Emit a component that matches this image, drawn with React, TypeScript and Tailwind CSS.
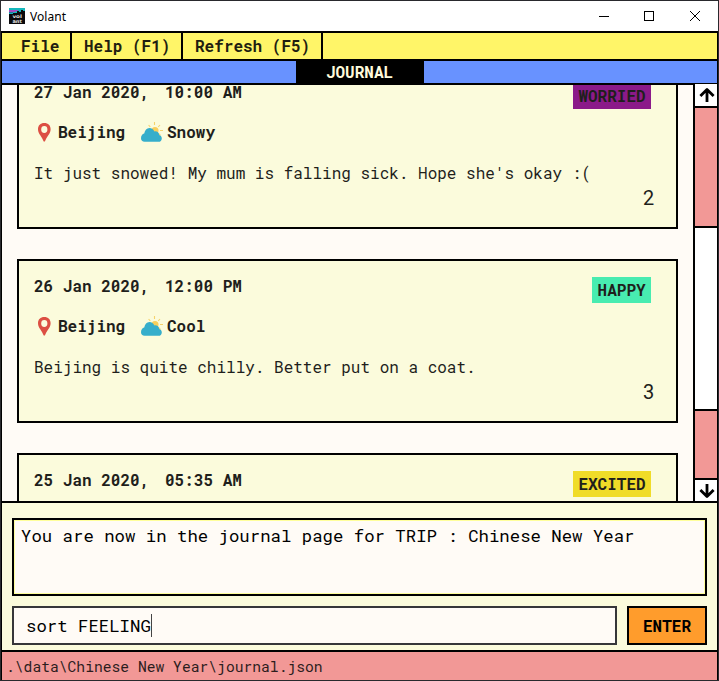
import React from "react";

const mono = "font-['Roboto_Mono','DejaVu_Sans_Mono',monospace]";

function AppIcon() {
  return (
    <svg width="16" height="16" viewBox="0 0 16 16">
      <rect width="16" height="16" fill="#0a0a0d" />
      <g shapeRendering="crispEdges">
        <path d="M0 0H16V3H14V2H12V4H10V3H8V5H4V6H0Z" fill="#14b8bd" />
        <path d="M0 2H9V3H7V4H0Z" fill="#a04cc0" />
        <path d="M0 4H4V5H0Z" fill="#2a6f9f" />
      </g>
      <g fill="#e2e2e2" fontFamily="DejaVu Sans" fontSize="4.8" fontWeight="700" textAnchor="middle">
        <text x="8.2" y="10" textLength="9.5" lengthAdjust="spacingAndGlyphs">vol</text>
        <text x="8.2" y="14.8" textLength="9.5" lengthAdjust="spacingAndGlyphs">ant</text>
      </g>
    </svg>
  );
}

function Pin() {
  return (
    <svg width="13" height="19" viewBox="0 0 13 19" className="block">
      <path
        fillRule="evenodd"
        fill="#dc4f43"
        d="M6.3 0C2.4 0 0 2.4 0 6.2C0 10.8 4.2 13.8 5.7 18.6H6.9C8.4 13.8 12.6 10.8 12.6 6.2C12.6 2.4 10.2 0 6.3 0ZM6.3 3.1A3.1 3.4 0 1 1 6.3 9.9A3.1 3.4 0 1 1 6.3 3.1Z"
      />
    </svg>
  );
}

function Weather() {
  return (
    <svg width="22" height="20" viewBox="0 0 22 20" className="block">
      <g stroke="#f6d36b" strokeWidth="1.1">
        <path d="M13.5 0V3M7.6 3L9.3 5M19 3L17.2 5M19 8.5H22M17.6 11.5L19.5 13.3" />
      </g>
      <circle cx="14" cy="8.5" r="3.5" fill="#f8cf5c" />
      <path
        d="M3.6 19.8C1.4 19.8 0 18.4 0 16.2C0 13.8 1.2 12 3.2 11.5C4 8.2 5.6 6 8.4 6C10.8 6 12.5 7.3 13.3 9.4C16 9 18.2 10.6 18.2 13C19.8 13.4 20.8 14.8 20.8 16.4C20.8 18.4 19.4 19.8 17.4 19.8Z"
        fill="#36aecb"
      />
    </svg>
  );
}

function Arrow({ down = false }: { down?: boolean }) {
  return (
    <svg width="16" height="16" viewBox="0 0 16 16" className={down ? "rotate-180" : ""} fill="none" stroke="#000" strokeWidth="2.8">
      <path d="M8 15V2.4M1.4 9L8 2.4L14.6 9" strokeLinejoin="round" />
    </svg>
  );
}

interface Entry {
  date: string;
  time: string;
  weather: string;
  text: string;
  feeling: string;
  badge: string;
  index: number;
}

const entries: Entry[] = [
  { date: "27 Jan 2020,", time: "10:00 AM", weather: "Snowy", text: "It just snowed! My mum is falling sick. Hope she's okay :(", feeling: "WORRIED", badge: "bg-[#8b1a89]", index: 2 },
  { date: "26 Jan 2020,", time: "12:00 PM", weather: "Cool", text: "Beijing is quite chilly. Better put on a coat.", feeling: "HAPPY", badge: "bg-[#48ecb0]", index: 3 },
  { date: "25 Jan 2020,", time: "05:35 AM", weather: "", text: "", feeling: "EXCITED", badge: "bg-[#f0dc28]", index: 4 },
];

function Card({ entry }: { entry: Entry }) {
  return (
    <article className="h-[164px] shrink-0 border-2 border-black bg-[#fbfbdc] pt-[13px] pr-[25px] pl-[15px] leading-6 text-[#1f1f1c]">
      <div className="flex h-6 items-start justify-between font-bold">
        <div className="flex gap-[15.8px]">
          <span>{entry.date}</span>
          <span>{entry.time}</span>
        </div>
        <span className={`mt-[3px] h-[26px] px-[5.4px] leading-[26px] ${entry.badge}`}>{entry.feeling}</span>
      </div>
      {entry.text && (
        <>
          <div className="mt-4 flex h-6 items-center pl-1 font-bold">
            <Pin />
            <span className="ml-[7px] w-[83px]">Beijing</span>
            <Weather />
            <span className="ml-1">{entry.weather}</span>
          </div>
          <p className="mt-[17px] whitespace-nowrap">{entry.text}</p>
          <div className="-mr-1 text-right text-xl leading-6">{entry.index}</div>
        </>
      )}
    </article>
  );
}

export default function App() {
  return (
    <div className={`flex h-[681px] w-[719px] flex-col overflow-hidden border border-[#29292d] bg-white text-base ${mono}`}>
      <header className="flex h-[30px] shrink-0 items-center pl-2">
        <AppIcon />
        <span className="ml-[5px] grow pt-px font-['Noto_Sans','Open_Sans',sans-serif] text-xs tracking-[0.05px] text-black">Volant</span>
        <svg width="105" height="12" viewBox="0 0 105 12" className="mr-[16px]" fill="none" stroke="#000">
          <path d="M2 6.5H12" />
          <rect x="47.5" y="1.5" width="9" height="9" />
          <path d="M93 1L103 11M103 1L93 11" />
        </svg>
      </header>

      <div className="flex min-h-0 grow flex-col border-x border-black">
        <nav className="flex h-[30px] shrink-0 border-y-2 border-black bg-[#fff568] font-bold leading-[26px] text-[#1f1f10]">
          <span className="w-[70px] border-r-2 border-black pl-[19px]">File</span>
          <span className="w-[111px] border-r-2 border-black pl-3">Help (F1)</span>
          <span className="w-[140px] border-r-2 border-black pl-3">Refresh (F5)</span>
        </nav>
        <div className="flex h-6 shrink-0 border-b-2 border-black bg-[#6892ff] pl-[294px]">
          <h1 className="w-32 bg-black pr-px text-center font-bold leading-[22px] text-[#fffbdc]">JOURNAL</h1>
        </div>

        <main className="flex h-[416px] shrink-0 bg-[#fffbf6]">
          <section className="flex min-w-0 grow flex-col overflow-hidden px-[15px]">
            <div className="-mt-5 flex flex-col gap-[30px]">
              {entries.map((entry) => (
                <Card key={entry.index} entry={entry} />
              ))}
            </div>
          </section>
          <aside className="-mt-px flex w-6 shrink-0 flex-col border-l-2 border-black bg-[#f29896]">
            <div className="flex h-6 items-center justify-center border-b-2 border-black bg-white pl-px">
              <Arrow />
            </div>
            <div className="mt-[118px] h-[185px] border-y-2 border-black bg-white" />
            <div className="mt-auto flex h-[23px] items-center justify-center border-t-2 border-black bg-white pl-px">
              <Arrow down />
            </div>
          </aside>
        </main>

        <section className="h-[149px] shrink-0 border-t-2 border-black bg-[#fbfbdc] px-2.5 pt-[15px] text-[17.33px]">
          <div className="h-[78px] border-2 border-black bg-[#fffbf6]">
            <p className="h-full border border-[#ffff9c] pl-1.5 leading-[29px] text-black">
              You are now in the journal page for TRIP : Chinese New Year
            </p>
          </div>
          <div className="mt-2.5 flex h-[39px] gap-2.5">
            <div className="flex grow items-center border-2 border-[#363639] bg-[#fffbf6] pl-3">
              <span>sort FEELING</span>
              <span className="h-[23px] w-px bg-[#444]" />
            </div>
            <button className="w-20 border-2 border-black bg-[#ff9c2c] text-base font-bold">ENTER</button>
          </div>
        </section>

        <footer className="h-[30px] shrink-0 border-t-2 border-black bg-[#f29896] pl-1 text-[14.67px] leading-[29px] text-[#2c1d1d]">
          {".\\data\\Chinese New Year\\journal.json"}
        </footer>
      </div>
    </div>
  );
}
